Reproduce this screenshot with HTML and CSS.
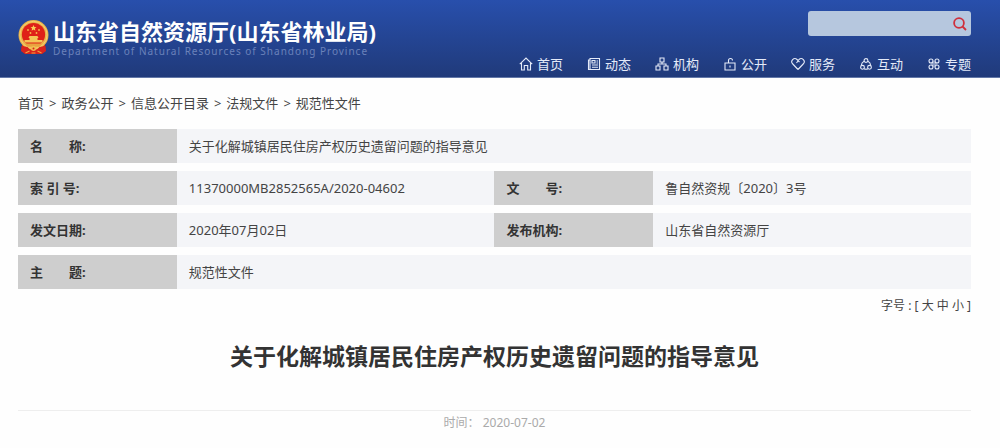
FILE: index.html
```html
<!DOCTYPE html>
<html lang="zh-CN">
<head>
<meta charset="utf-8">
<meta name="viewport" content="width=device-width, initial-scale=1">
<title>关于化解城镇居民住房产权历史遗留问题的指导意见</title>
<link rel="stylesheet" href="styles.css">
</head>
<body>
<header class="header">
  <a class="brand" href="#">
    <svg class="emblem" viewBox="0 0 30 35" aria-hidden="true">
      <path d="M4 23h22l1.500 8-4 3H6.500l-4-3z" fill="#d8231d"/>
      <circle cx="15" cy="15" r="15" fill="#eab24a"/>
      <circle cx="15" cy="15" r="13.6" fill="none" stroke="#f6d271" stroke-width="1"/>
      <circle cx="15" cy="14.5" r="11.6" fill="#df2018"/>
      <path d="M15 5l.9 2 2.1.2-1.600 1.400.5 2.100-1.900-1.100-1.900 1.100.5-2.100L12 7.200l2.100-.2z" fill="#f9cf58"/>
      <g fill="#f5b94b"><circle cx="9.500" cy="10" r=".9"/><circle cx="20.500" cy="10" r=".9"/><circle cx="12" cy="13" r=".9"/><circle cx="18" cy="13" r=".9"/></g>
      <path d="M11 16h8l1 2h-1v2h5v2.500H6V20h5v-2h-1z" fill="#f4c557"/>
      <path d="M6 23.500h18l-3 3H9z" fill="#e9a33f"/>
      <path d="M3 26l6 1 3 3h6l3-3 6-1v5l-4 3H7l-4-3z" fill="#d8231d"/>
      <circle cx="15" cy="28.500" r="2.500" fill="#f2bd50"/><circle cx="15" cy="28.500" r="1" fill="#d8231d"/>
      <path d="M7 33l4-2M23 33l-4-2M13 33h4" stroke="#f0a53f" stroke-width="1.200" fill="none"/>
    </svg>
    <span class="brand-text">
      <span class="brand-name">山东省自然资源厅(山东省林业局)</span>
      <span class="brand-sub">Department of Natural Resources of Shandong Province</span>
    </span>
  </a>
  <div class="header-side">
    <form class="search" role="search">
      <input class="search-input" type="text" aria-label="搜索">
      <button class="search-button" type="button" aria-label="搜索">
        <svg class="search-icon" viewBox="0 0 14 14"><circle cx="6" cy="6" r="4.900"/><path d="M9.500 9.500l3.500 3.500"/></svg>
      </button>
    </form>
    <nav class="nav">
      <a class="nav-link" href="#"><svg class="icon" viewBox="0 0 14 14"><path d="M.8 7.200L7 1l6.200 6.200M2.500 6v7h2.800V8.500h3.400V13h2.800V6"/></svg>首页</a>
      <a class="nav-link" href="#"><svg class="icon" viewBox="0 0 14 14"><path d="M3 1.500h9.500v11H1.500V3H3zM3 3v9.500M5 3.500h3v2.500H5zM9.500 4H11M9.500 6H11M5 8h6M5 10.200h6"/></svg>动态</a>
      <a class="nav-link" href="#"><svg class="icon" viewBox="0 0 14 14"><path d="M5 1h4v4H5zM1 9h4v4H1zM9 9h4v4H9zM7 5v2M3 9V7h8v2"/></svg>机构</a>
      <a class="nav-link" href="#"><svg class="icon" viewBox="0 0 14 14"><path d="M2 6h10v7H2zM5.500 6V3.500a2 2 0 0 1 4 0M7 8.500v2"/></svg>公开</a>
      <a class="nav-link" href="#"><svg class="icon" viewBox="0 0 14 14"><path d="M7 12.500L1.800 7A3 3 0 0 1 6 2.500L8.500 5M5.500 6L8 2.500A3 3 0 0 1 12.200 7L7 12.500"/></svg>服务</a>
      <a class="nav-link" href="#"><svg class="icon" viewBox="0 0 14 14"><circle cx="7" cy="3.500" r="1.900"/><circle cx="3.500" cy="10.300" r="1.900"/><circle cx="10.500" cy="10.300" r="1.900"/><path d="M5 4.200Q2.500 5.500 2.300 8.500M9 4.200q2.500 1.300 2.700 4.300M5 11.800q2 .9 4 0"/></svg>互动</a>
      <a class="nav-link" href="#"><svg class="icon" viewBox="0 0 14 14"><circle cx="4" cy="4" r="2"/><circle cx="10" cy="4" r="2"/><circle cx="4" cy="10" r="2"/><circle cx="10" cy="10" r="2"/><path d="M4 6h6M4 8h6M6 4v6M8 4v6" stroke-width=".6"/></svg>专题</a>
    </nav>
  </div>
</header>
<main class="content">
  <nav class="crumbs" aria-label="当前位置">
    <a href="#">首页</a><span>&gt;</span><a href="#">政务公开</a><span>&gt;</span><a href="#">信息公开目录</a><span>&gt;</span><a href="#">法规文件</a><span>&gt;</span><a href="#">规范性文件</a>
  </nav>
  <table class="meta">
    <colgroup><col class="col-label"><col class="col-value"><col class="col-label"><col class="col-value"></colgroup>
    <tbody>
      <tr><th scope="row">名　　称:</th><td colspan="3">关于化解城镇居民住房产权历史遗留问题的指导意见</td></tr>
      <tr><th scope="row">索 引 号:</th><td>11370000MB2852565A/2020-04602</td><th scope="row">文　　号:</th><td>鲁自然资规〔2020〕3号</td></tr>
      <tr><th scope="row">发文日期:</th><td>2020年07月02日</td><th scope="row">发布机构:</th><td>山东省自然资源厅</td></tr>
      <tr><th scope="row">主　　题:</th><td colspan="3">规范性文件</td></tr>
    </tbody>
  </table>
  <div class="font-size">字号 : [ <a href="#">大</a> <a href="#">中</a> <a href="#">小</a> ]</div>
  <h1 class="title">关于化解城镇居民住房产权历史遗留问题的指导意见</h1>
  <p class="date">时间： 2020-07-02</p>
</main>
</body>
</html>
```
FILE: styles.css
```css
* {
  box-sizing: border-box;
}

body {
  margin: 0;
  background: #fefefe;
  color: #444;
  font: 13px/20px "Noto Sans", "Noto Sans CJK SC", sans-serif;
}

a {
  color: inherit;
  text-decoration: none;
}

.header {
  display: flex;
  justify-content: space-between;
  align-items: flex-start;
  padding: 11px 29px 3px 18px;
  border-bottom: 1px solid #6378a8;
  background: linear-gradient(#284fac, #203a7a);
  color: #e4eaf8;
}

.brand {
  display: flex;
  align-items: center;
  gap: 4px;
  padding-top: 6px;
}

.emblem {
  width: 31px;
  height: 35px;
}

.brand-text {
  display: flex;
  flex-direction: column;
  white-space: nowrap;
}

.brand-name {
  color: #fff;
  font-size: 22px;
  font-weight: 700;
  line-height: 28px;
}

.brand-sub {
  color: #6b82ba;
  font-size: 10px;
  line-height: 12px;
  letter-spacing: 1px;
}

.header-side {
  display: flex;
  flex-direction: column;
  align-items: flex-end;
  gap: 18px;
}

.search {
  display: flex;
  width: 163px;
  height: 25px;
  border-radius: 3px;
  background: #b6c7de;
}

.search-input {
  flex: 1;
  min-width: 0;
  padding: 0 8px;
  border: 0;
  background: transparent;
  font: inherit;
}

.search-button {
  display: flex;
  align-items: center;
  padding: 0 4px;
  border: 0;
  background: transparent;
}

.search-icon {
  width: 14px;
  height: 14px;
  fill: none;
  stroke: #cf2f3c;
  stroke-width: 1.8;
}

.nav {
  display: flex;
  gap: 24px;
}

.nav-link {
  display: flex;
  align-items: center;
  gap: 4px;
  white-space: nowrap;
}

.icon {
  width: 14px;
  height: 14px;
  fill: none;
  stroke: currentColor;
  stroke-width: 1.1;
}

.content {
  padding: 15px 29px 12px 18px;
}

.crumbs {
  display: flex;
  gap: 5px;
}

.meta {
  width: 100%;
  margin-top: 8px;
  border-spacing: 0 8px;
  table-layout: fixed;
}

.col-label {
  width: 16.667%;
}

.col-value {
  width: 33.333%;
}

.meta th,
.meta td {
  height: 34px;
  padding: 7px 12px;
  text-align: left;
}

.meta th {
  background: #cecece;
  color: #333;
  font-weight: 700;
}

.meta td {
  background: #f4f5f8;
}

.font-size {
  font-size: 12px;
  line-height: 18px;
  text-align: right;
}

.title {
  margin: 24px 0 0;
  padding-bottom: 37px;
  border-bottom: 1px solid #eee;
  color: #333;
  font-size: 23px;
  font-weight: 700;
  line-height: 34px;
  text-align: center;
}

.date {
  margin: 2px 0 0;
  color: #aaa;
  font-size: 12px;
  text-align: center;
}
```
